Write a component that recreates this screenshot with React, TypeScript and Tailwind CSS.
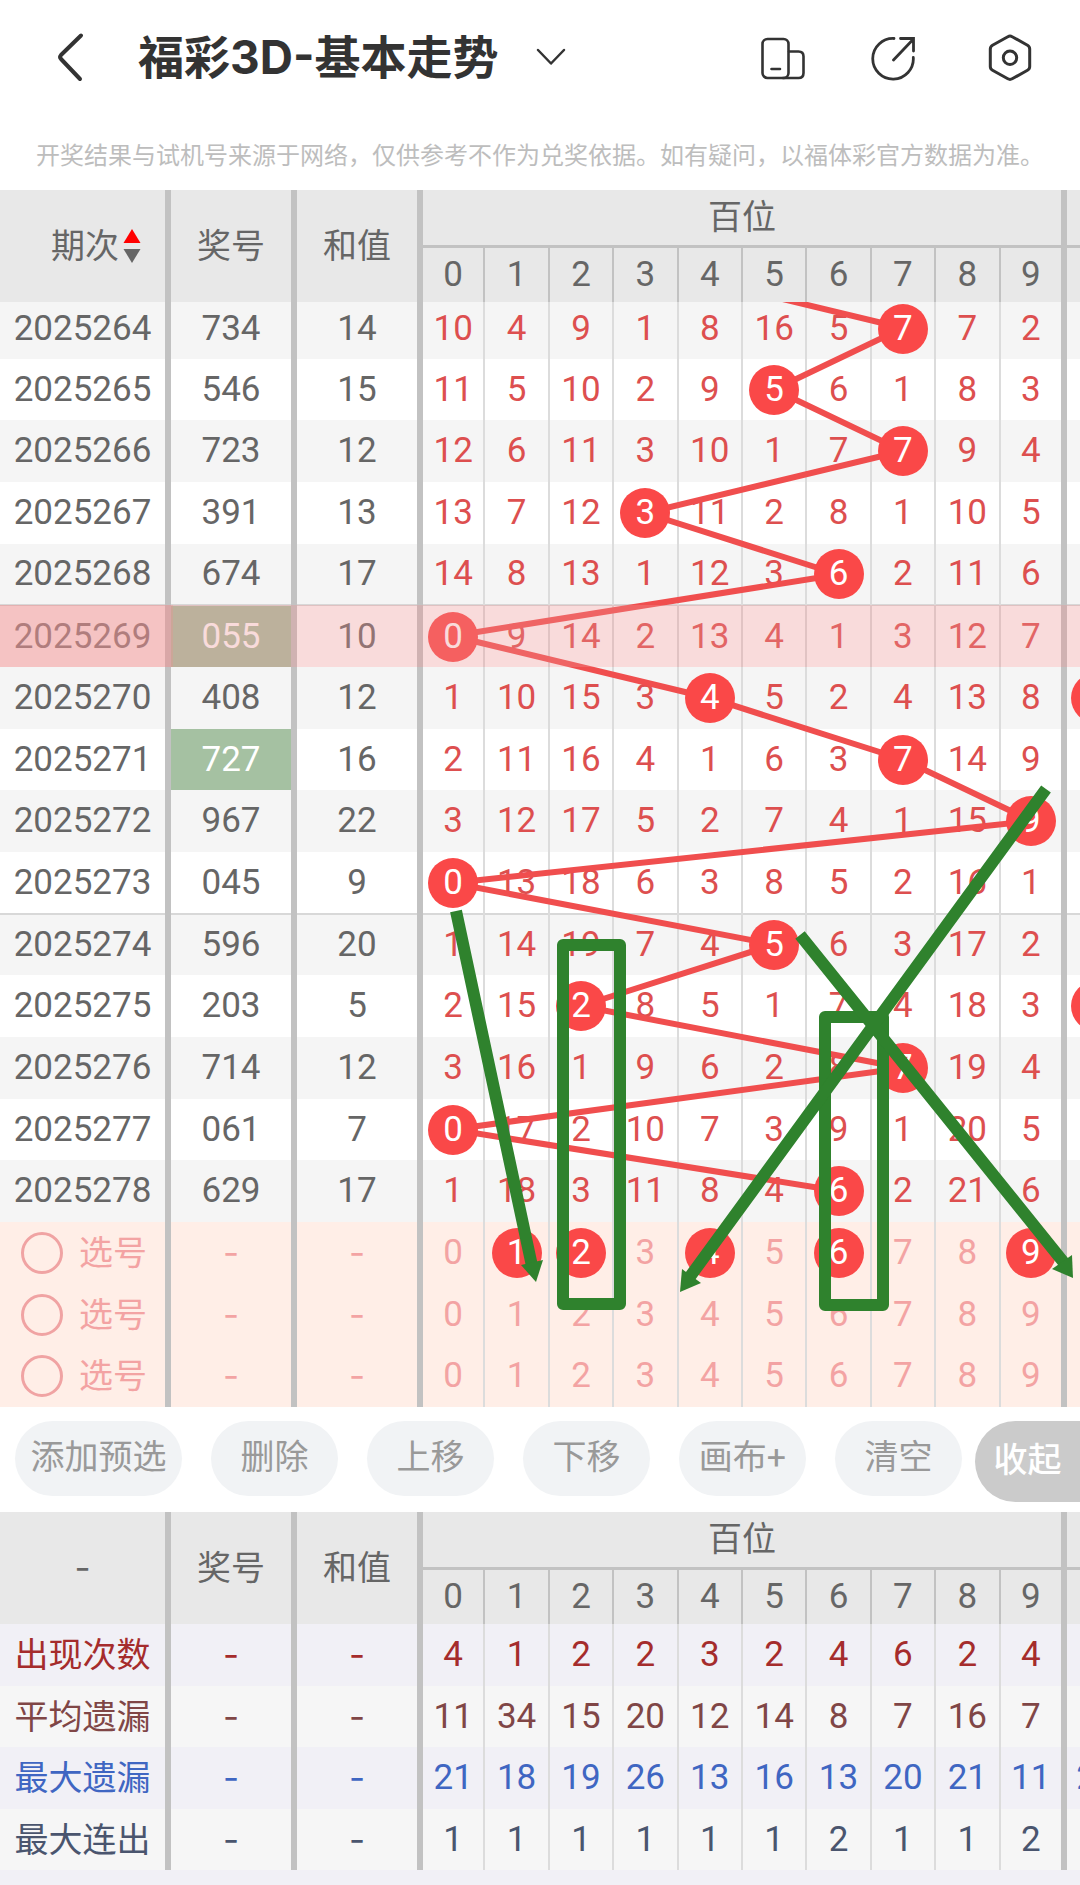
import React from "react";
import clsx from "clsx";

const DIGITS = [0, 1, 2, 3, 4, 5, 6, 7, 8, 9];

type Draw = {
  issue: string;
  number: string;
  sum: number;
  values: number[];
  hit: number;
  marked?: boolean;
  highlighted?: boolean;
  divider?: boolean;
  nextHit?: boolean;
};

const DRAWS: Draw[] = [
  { issue: "2025264", number: "734", sum: 14, values: [10, 4, 9, 1, 8, 16, 5, 7, 7, 2], hit: 7 },
  { issue: "2025265", number: "546", sum: 15, values: [11, 5, 10, 2, 9, 5, 6, 1, 8, 3], hit: 5 },
  { issue: "2025266", number: "723", sum: 12, values: [12, 6, 11, 3, 10, 1, 7, 7, 9, 4], hit: 7 },
  { issue: "2025267", number: "391", sum: 13, values: [13, 7, 12, 3, 11, 2, 8, 1, 10, 5], hit: 3 },
  { issue: "2025268", number: "674", sum: 17, values: [14, 8, 13, 1, 12, 3, 6, 2, 11, 6], hit: 6 },
  { issue: "2025269", number: "055", sum: 10, values: [0, 9, 14, 2, 13, 4, 1, 3, 12, 7], hit: 0, marked: true, highlighted: true, divider: true },
  { issue: "2025270", number: "408", sum: 12, values: [1, 10, 15, 3, 4, 5, 2, 4, 13, 8], hit: 4, nextHit: true },
  { issue: "2025271", number: "727", sum: 16, values: [2, 11, 16, 4, 1, 6, 3, 7, 14, 9], hit: 7, marked: true },
  { issue: "2025272", number: "967", sum: 22, values: [3, 12, 17, 5, 2, 7, 4, 1, 15, 9], hit: 9 },
  { issue: "2025273", number: "045", sum: 9, values: [0, 13, 18, 6, 3, 8, 5, 2, 16, 1], hit: 0 },
  { issue: "2025274", number: "596", sum: 20, values: [1, 14, 19, 7, 4, 5, 6, 3, 17, 2], hit: 5, divider: true },
  { issue: "2025275", number: "203", sum: 5, values: [2, 15, 2, 8, 5, 1, 7, 4, 18, 3], hit: 2, nextHit: true },
  { issue: "2025276", number: "714", sum: 12, values: [3, 16, 1, 9, 6, 2, 8, 7, 19, 4], hit: 7 },
  { issue: "2025277", number: "061", sum: 7, values: [0, 17, 2, 10, 7, 3, 9, 1, 20, 5], hit: 0 },
  { issue: "2025278", number: "629", sum: 17, values: [1, 18, 3, 11, 8, 4, 6, 2, 21, 6], hit: 6 },
];

const PICKS: number[][] = [[1, 2, 4, 6, 9], [], []];

const STATS = [
  { label: "出现次数", color: "text-[#a52c2c]", bg: "bg-[#f1f0f6]", values: [4, 1, 2, 2, 3, 2, 4, 6, 2, 4], next: "" },
  { label: "平均遗漏", color: "text-[#804646]", bg: "bg-[#f6f6f6]", values: [11, 34, 15, 20, 12, 14, 8, 7, 16, 7], next: "" },
  { label: "最大遗漏", color: "text-[#3f66c2]", bg: "bg-[#f1f0f6]", values: [21, 18, 19, 26, 13, 16, 13, 20, 21, 11], next: "21" },
  { label: "最大连出", color: "text-[#4a556e]", bg: "bg-[#f6f6f6]", values: [1, 1, 1, 1, 1, 1, 2, 1, 1, 2], next: "" },
];

const ACTIONS = ["添加预选", "删除", "上移", "下移", "画布+", "清空"];

/* Vertical centres of the draw rows, measured from the bottom of the table head. */
const rowCentres: number[] = [];
let cursor = 57;
DRAWS.forEach((_, i) => {
  if (i === 0) {
    rowCentres.push(26);
    return;
  }
  const h = i % 3 === 1 ? 61 : 62;
  rowCentres.push(cursor + h / 2);
  cursor += h;
});
const COL = 64.4;
const trend = [
  `${3.5 * COL},-36`,
  ...DRAWS.map((d, i) => `${(d.hit + 0.5) * COL},${rowCentres[i]}`),
].join(" ");

const THICK = "border-r-[6px] border-[#c2c2c2]";
const THIN = "border-r-2 border-r-[#dcdcdc]";

function Ball({ children }: { children?: React.ReactNode }) {
  return (
    <span className="relative z-20 mx-auto flex size-[50px] items-center justify-center rounded-full bg-[#fa4848] text-white">
      {children}
    </span>
  );
}

function Columns() {
  return (
    <colgroup>
      <col className="w-[168px]" />
      <col className="w-[126px]" />
      <col className="w-[126px]" />
      {DIGITS.map((d) => (
        <col key={d} />
      ))}
      <col className="w-4" />
    </colgroup>
  );
}

function Head({ first }: { first: React.ReactNode }) {
  return (
    <thead className="bg-[#e8e8e8] text-[#666]">
      <tr className="h-14">
        <th rowSpan={2} scope="col" className={clsx("p-0 font-normal", THICK)}>{first}</th>
        <th rowSpan={2} scope="col" className={clsx("p-0 text-[34px] font-normal", THICK)}>奖号</th>
        <th rowSpan={2} scope="col" className={clsx("p-0 text-[34px] font-normal", THICK)}>和值</th>
        <th colSpan={10} scope="colgroup" className="border-r-[6px] border-b-[3px] border-[#c2c2c2] p-0 text-[34px] font-normal">
          百位
        </th>
        <td className="border-b-[3px] border-[#c2c2c2] p-0" />
      </tr>
      <tr className="h-14">
        {DIGITS.map((d) => (
          <th key={d} scope="col" className={clsx("p-0 font-normal", d === 9 ? THICK : "border-r-2 border-r-[#c2c2c2]")}>
            {d}
          </th>
        ))}
        <td className="p-0" />
      </tr>
    </thead>
  );
}

function Dash() {
  return <span className="font-[Inter,sans-serif]">-</span>;
}

function TrendTable() {
  return (
    <div className="relative overflow-hidden">
      <table className="w-full table-fixed border-collapse text-center text-[35px] leading-10">
        <Columns />
        <Head
          first={
            <button type="button" className="ml-auto mr-6 flex items-center gap-1 text-[34px]">
              期次
              <svg width="18" height="34" viewBox="0 0 18 34" aria-hidden="true">
                <path d="M9 0L17.500 14H.5Z" fill="#f00" />
                <path d="M.5 20H17.500L9 34Z" fill="#666" />
              </svg>
            </button>
          }
        />
        <tbody>
          {DRAWS.map((draw, r) => (
            <tr
              key={draw.issue}
              className={clsx(
                "relative text-[#666]",
                r === 0 ? "h-[57px] *:pb-1" : r % 3 === 1 ? "h-[61px]" : "h-[62px]",
                r % 2 === 0 ? "bg-[#f5f5f5]" : "bg-white",
                draw.divider && "*:border-t-2 *:border-t-[#d8d8d8]",
              )}
            >
              <td className={clsx("px-0", THICK)}>
                {draw.issue}
                {draw.highlighted && (
                  <>
                    <span className="absolute inset-0 z-30 bg-[#ec9393]/33" />
                    <span className="absolute inset-y-0 left-0 z-30 w-[173px] bg-[#ec9393]/33" />
                  </>
                )}
              </td>
              <td className={clsx("px-0", THICK, draw.marked && "bg-[#a5c1a2] text-white")}>{draw.number}</td>
              <td className={clsx("px-0", THICK)}>{draw.sum}</td>
              {draw.values.map((v, d) => (
                <td key={d} className={clsx("px-0 text-[#dd4f4f]", d === 9 ? THICK : THIN)}>
                  {d === draw.hit ? <Ball>{v}</Ball> : v}
                </td>
              ))}
              <td className="overflow-hidden p-0">
                {draw.nextHit && (
                  <div className="w-[58px]">
                    <Ball />
                  </div>
                )}
              </td>
            </tr>
          ))}
          {PICKS.map((picked, r) => (
            <tr key={r} className={clsx("bg-[#ffeee7] text-[#f3a3a3]", r === 1 ? "h-[61px]" : "h-[62px]")}>
              <td className={clsx("p-0", THICK)}>
                <label className="flex items-center gap-4 pl-[21px] text-[34px]">
                  <input
                    type="radio"
                    name="pick"
                    className="size-[42px] shrink-0 appearance-none rounded-full border-[3px] border-[#f0a3a3]"
                  />
                  选号
                </label>
              </td>
              <td className={clsx("p-0", THICK)}><Dash /></td>
              <td className={clsx("p-0", THICK)}><Dash /></td>
              {DIGITS.map((d) => (
                <td key={d} className={clsx("p-0", d === 9 ? THICK : THIN)}>
                  <button type="button" className="block w-full">
                    {picked.includes(d) ? <Ball>{d}</Ball> : d}
                  </button>
                </td>
              ))}
              <td className="p-0" />
            </tr>
          ))}
        </tbody>
      </table>

      <div className="pointer-events-none absolute top-28 right-4 bottom-0 left-[420px] z-10">
        <svg className="block size-full" viewBox="0 0 644 1105" preserveAspectRatio="none" aria-hidden="true">
          <polyline points={trend} fill="none" stroke="#f04e4e" strokeWidth="6" />
        </svg>
      </div>
      <div className="pointer-events-none absolute top-28 right-4 bottom-0 left-[420px] z-40">
        <svg className="block size-full overflow-visible" viewBox="0 0 644 1105" preserveAspectRatio="none" aria-hidden="true">
          <g fill="none" stroke="#2f822d" strokeWidth="12" strokeLinejoin="round">
            <rect x="143" y="643" width="57" height="359" />
            <rect x="405" y="715" width="58" height="288" />
            <path d="M36 609L112 964M626 487L269 976M380 633L645 962" />
          </g>
          <g fill="#2f822d">
            <path d="M116 980L101 963L123 958Z" />
            <path d="M260 990L262 967L281 981Z" />
            <path d="M653 976L632 967L652 953Z" />
          </g>
        </svg>
      </div>
    </div>
  );
}

function StatsTable() {
  return (
    <table className="w-full table-fixed border-collapse overflow-hidden text-center text-[35px] leading-10">
      <Columns />
      <Head first={<Dash />} />
      <tbody>
        {STATS.map((row, r) => (
          <tr key={row.label} className={clsx(row.bg, row.color, r % 2 === 0 ? "h-[62px]" : "h-[61px]")}>
            <th scope="row" className={clsx("p-0 text-[34px] font-normal", THICK)}>{row.label}</th>
            <td className={clsx("p-0", THICK)}><Dash /></td>
            <td className={clsx("p-0", THICK)}><Dash /></td>
            {row.values.map((v, d) => (
              <td key={d} className={clsx("p-0", d === 9 ? THICK : THIN)}>{v}</td>
            ))}
            <td className="overflow-hidden p-0">
              <div className="w-[58px]">{row.next}</div>
            </td>
          </tr>
        ))}
      </tbody>
    </table>
  );
}

function TopBar() {
  return (
    <header className="flex h-[114px] items-center pr-12 pl-14 text-[#333]">
      <button type="button" aria-label="返回">
        <svg width="28" height="50" viewBox="0 0 28 50" fill="none" stroke="currentColor" strokeWidth="4" strokeLinecap="round" strokeLinejoin="round">
          <path d="M25 3.500L5 23Q3.200 25 5 27L24 47" />
        </svg>
      </button>
      <h1 className="ml-[54px] font-[Inter,'Noto_Sans_CJK_SC',sans-serif] text-[46px] leading-none font-bold">福彩3D-基本走势</h1>
      <button type="button" aria-label="切换走势" className="ml-[38px]">
        <svg width="30" height="18" viewBox="0 0 30 18" fill="none" stroke="currentColor" strokeWidth="2.500" strokeLinecap="round" strokeLinejoin="round">
          <path d="M2 2L15 15.500L28 2" />
        </svg>
      </button>
      <div className="ml-auto flex items-center gap-[73px]">
        <div className="flex items-center gap-[66px]">
          <button type="button" aria-label="布局">
            <svg width="44" height="50" viewBox="0 0 44 50" fill="none" stroke="currentColor" strokeWidth="2.600" strokeLinecap="round">
              <rect x="1.500" y="7" width="26" height="39" rx="5" />
              <path d="M28 19.500H37.500Q42.500 19.500 42.500 24.500V41Q42.500 46 37.500 46H22M10.500 37H19" />
            </svg>
          </button>
          <button type="button" aria-label="分享">
            <svg width="44" height="50" viewBox="0 0 44 50" fill="none" stroke="currentColor" strokeWidth="2.800" strokeLinecap="round">
              <path d="M23 6.500A20.300 20.300 0 1 0 42.300 25.500M22.500 28L42 7.500M29.500 6.500H42.500V19" />
            </svg>
          </button>
        </div>
        <button type="button" aria-label="设置">
          <svg width="44" height="50" viewBox="0 0 44 50" fill="none" stroke="currentColor" strokeWidth="3" strokeLinejoin="round">
            <path d="M19.800 4.700Q22 3.500 24.200 4.700L39.500 13.200Q41.700 14.500 41.700 17V34.500Q41.700 37 39.500 38.200L24.200 46.800Q22 48 19.800 46.800L4.500 38.200Q2.300 37 2.300 34.500V17Q2.300 14.500 4.500 13.200Z" />
            <circle cx="22" cy="25.800" r="6.700" />
          </svg>
        </button>
      </div>
    </header>
  );
}

export default function App() {
  return (
    <div className="min-h-screen overflow-hidden bg-[#f1f0f6] font-[Roboto,'Noto_Sans_CJK_SC',sans-serif]">
      <div className="bg-white">
        <TopBar />
        <p className="flex h-[76px] items-center justify-center pt-2 text-[24px] whitespace-nowrap text-[#bdbdbd]">
          开奖结果与试机号来源于网络，仅供参考不作为兑奖依据。如有疑问，以福体彩官方数据为准。
        </p>
      </div>
      <TrendTable />
      <div className="flex h-[105px] items-start gap-[29px] bg-white pt-3.5 pl-[15px]">
        {ACTIONS.map((label) => (
          <button
            key={label}
            type="button"
            className={clsx(
              "h-[75px] shrink-0 rounded-full bg-[#f1f3f5] pb-0.5 text-[34px] text-[#999]",
              label.length > 3 ? "w-[167px]" : "w-[127px]",
            )}
          >
            {label}
          </button>
        ))}
        <button type="button" className="-ml-4 h-[81px] flex-1 rounded-l-full bg-[#cbcbcb] pb-0.5 text-[34px] font-medium whitespace-nowrap text-white">
          收起
        </button>
      </div>
      <StatsTable />
    </div>
  );
}
